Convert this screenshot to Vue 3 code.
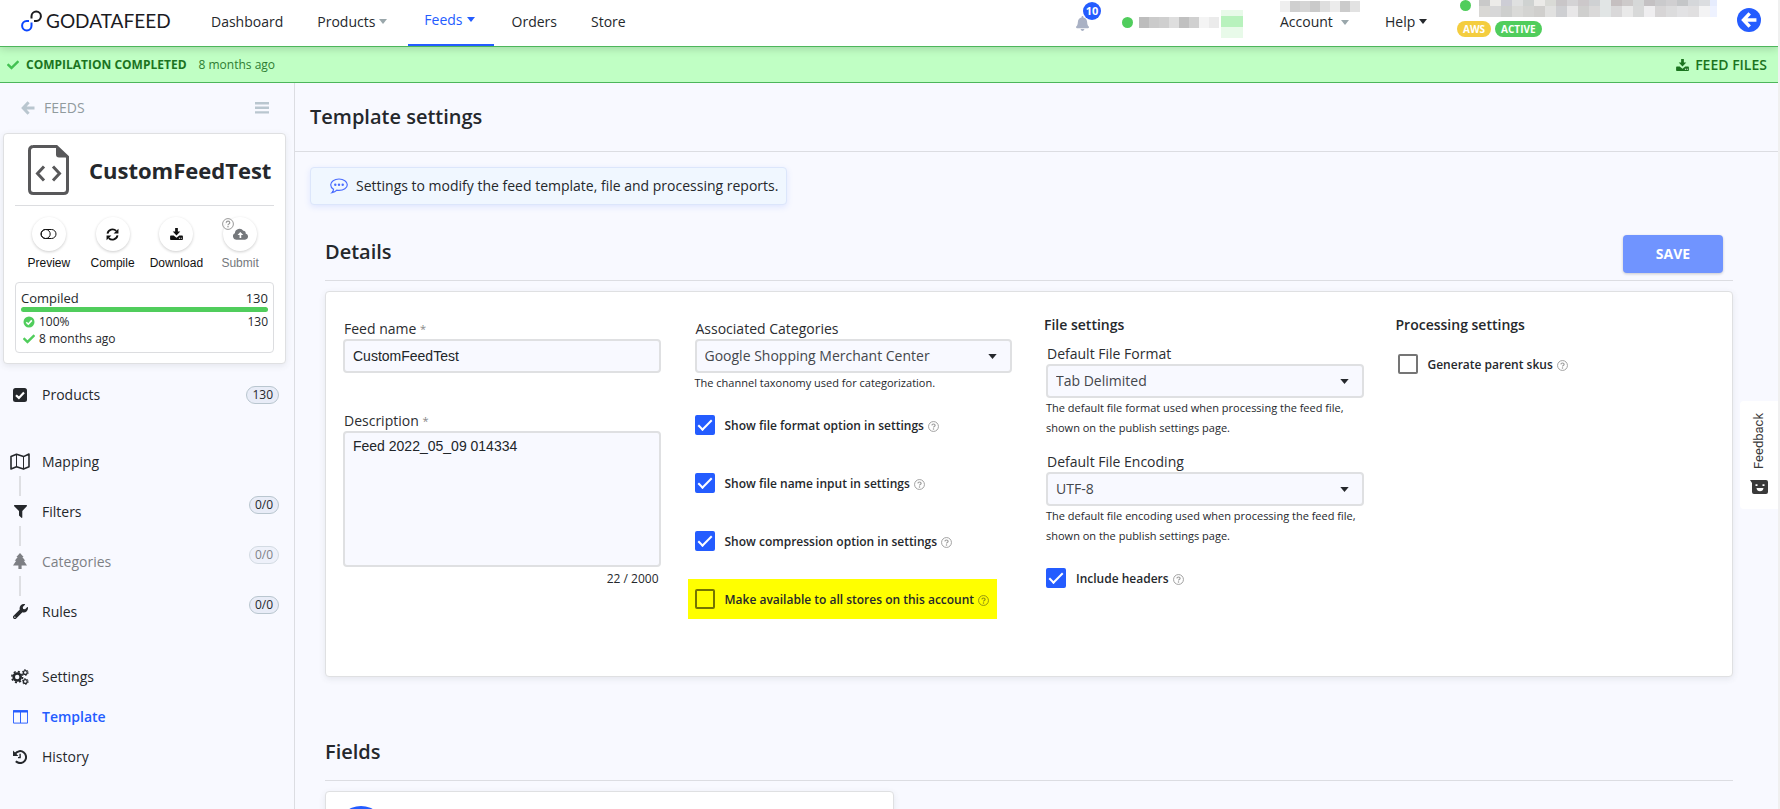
<script setup>
import { h, ref } from 'vue'

const glyphs = {
  check: ['0 0 512 512', '<path d="M173.9 439.4L7.5 273c-10-10-10-26.200 0-36.200l36.200-36.200c10-10 26.200-10 36.200 0L192 312.700 432.100 72.600c10-10 26.200-10 36.200 0l36.200 36.200c10 10 10 26.200 0 36.200L210.100 439.400c-10 10-26.200 10-36.200 0z"/>'],
  arrow: ['0 0 14 14', '<path d="M7.600 1.200L2.200 7l5.400 5.800M2.600 7H13.500" fill="none" stroke="currentColor" stroke-width="3"/>'],
  bars: ['0 0 14 12', '<path d="M0 0h14v2.400H0zM0 4.600h14V7H0zM0 9.200h14v2.400H0z"/>'],
  bell: ['0 0 448 512', '<path d="M224 512c35.320 0 63.970-28.650 63.970-64H160.030c0 35.350 28.650 64 63.970 64zm215.390-149.710c-19.320-20.760-55.470-51.990-55.470-154.290 0-77.700-54.480-139.900-127.940-155.160V32c0-17.670-14.320-32-31.980-32s-31.980 14.330-31.980 32v20.840C118.560 68.100 64.080 130.300 64.080 208c0 102.300-36.150 133.530-55.470 154.290-6 6.450-8.660 14.160-8.610 21.710.11 16.400 12.980 32 32.100 32h383.800c19.120 0 32-15.600 32.100-32 .05-7.550-2.610-15.270-8.610-21.710z"/>'],
  caret: ['0 0 10 6', '<path d="M0 0h10L5 6z"/>'],
  download: ['0 0 16 15', '<path d="M6.300 0h3.400v4.500h3L8 9.300 3.300 4.500h3z"/><path d="M1 9.500h3.500L8 12.200l3.500-2.700H15q1 0 1 1V14q0 1-1 1H1q-1 0-1-1v-3.500q0-1 1-1z"/><path d="M11 12.200h1.300v1.200H11zM13.300 12.200h1.300v1.200h-1.300z" fill="#fff"/>'],
  file: ['0 0 41 50', '<path d="M5 1.500h23.500L39.500 12v32.500q0 4-4 4H5.500q-4 0-4-4v-39q0-4 4-4z" fill="none" stroke="currentColor" stroke-width="3"/><path d="M28 1l12 11.500H31q-3 0-3-3z"/><path d="M16 21.500L9.500 28.500 16 35.500M25 21.500l6.500 7-6.500 7" fill="none" stroke="currentColor" stroke-width="3"/>'],
  toggle: ['0 0 17 12', '<rect x="1" y="1.500" width="15" height="9" rx="4.500" fill="none" stroke="currentColor" stroke-width="1"/><circle cx="5.700" cy="6" r="4.500" fill="none" stroke="currentColor" stroke-width="1"/>'],
  refresh: ['0 0 14 14', '<path d="M1.600 6A5.500 5.500 0 0 1 11 3.200M12.400 8A5.500 5.500 0 0 1 3 10.800" fill="none" stroke="currentColor" stroke-width="2"/><path d="M13.400.8V6H8.200zM.6 13.200V8h5.200z"/>'],
  cloud: ['0 0 16 12', '<path d="M3.500 12A3.500 3.500 0 0 1 2 5.300 5 5 0 0 1 11 2.500 2.500 2.500 0 0 1 13.500 5.500 3.300 3.300 0 0 1 12.800 12z"/><path d="M7.800 3.800L4.800 7H7v3.200h1.800V7H11z" fill="#fff"/>'],
  help: ['0 0 12 12', '<circle cx="6" cy="6" r="5.400" fill="none" stroke="currentColor"/><path d="M4.200 4.800Q4.300 3.200 6 3.200T7.800 4.700Q7.800 5.500 6.800 6 6 6.400 6 7.200" fill="none" stroke="currentColor" stroke-width="1.200"/><circle cx="6" cy="8.800" r=".8"/>'],
  circleCheck: ['0 0 12 12', '<circle cx="6" cy="6" r="5.500"/><path d="M3.300 6.200l2 2 3.500-3.800" fill="none" stroke="#fff" stroke-width="1.600"/>'],
  squareCheck: ['0 0 14 14', '<rect width="14" height="14" rx="2.500"/><path d="M3 7.200l2.900 2.700L11 4.600" fill="none" stroke="#fff" stroke-width="2.200"/>'],
  map: ['0 0 20 17', '<path d="M1 3.500L6.500 1.200l7 2.400L19 1v12.800l-5.500 2.300-7-2.400L1 16z" fill="none" stroke="currentColor" stroke-width="1.600" stroke-linejoin="round"/><path d="M6.500 1.500v12M13.500 4v12" stroke="currentColor" stroke-width="1"/>'],
  filter: ['0 0 13 13', '<path d="M.5 0h12q.8.500.3 1.200L8.300 6v6.600q-.3.600-.9.200L5 10.600V6L.2 1.200Q-.300.400.5 0z"/>'],
  tree: ['0 0 14 16', '<path d="M7 0l3.600 4H9.300l3 3.700h-1.500L14 12.500H8.600V16H5.400v-3.500H0l3.200-4.800H1.700l3-3.700H3.400z"/>'],
  wrench: ['0 0 512 512', '<path d="M507.730 109.100c-2.240-9.030-13.540-12.090-20.120-5.510l-74.360 74.360-67.880-11.310-11.310-67.880 74.360-74.360c6.620-6.620 3.430-17.900-5.660-20.160-47.380-11.740-99.550.91-136.580 37.930-39.640 39.640-50.550 97.100-34.050 147.200L18.740 402.760c-24.990 24.990-24.990 65.510 0 90.500 24.990 24.990 65.510 24.990 90.500 0l213.210-213.210c50.120 16.710 107.470 5.680 147.370-34.220 37.070-37.070 49.700-89.320 37.910-136.730zM64 472c-13.250 0-24-10.750-24-24 0-13.260 10.750-24 24-24s24 10.740 24 24c0 13.250-10.750 24-24 24z"/>'],
  cogs: ['0 0 18 16', '<g fill="none" stroke="currentColor"><circle cx="6.200" cy="8" r="3.500" stroke-width="2.600"/><circle cx="6.200" cy="8" r="5.400" stroke-width="1.600" stroke-dasharray="2.100 2.140"/><circle cx="14.300" cy="3.500" r="1.900" stroke-width="1.300"/><circle cx="14.300" cy="3.500" r="2.900" stroke-width="1" stroke-dasharray="1.500 1.540"/><circle cx="14.300" cy="12.500" r="1.900" stroke-width="1.300"/><circle cx="14.300" cy="12.500" r="2.900" stroke-width="1" stroke-dasharray="1.500 1.540"/></g>'],
  columns: ['0 0 16 14', '<path d="M.5 0h15v13.500H.500z" fill="none" stroke="currentColor"/><path d="M0 0h16v2.200H0zM7.500 2h1v11.500h-1z"/>'],
  history: ['0 0 14 14', '<path d="M2.200 3.600A6 6 0 1 1 2.800 11.300" fill="none" stroke="currentColor" stroke-width="2"/><path d="M0 .6V6h5.400zM6.400 3.800h1.400v3.300H6.400z"/><path d="M7.800 6.500v1.700H5V7h1.400z"/>'],
  comment: ['0 0 18 16', '<path d="M9 1c4.600 0 8.300 2.500 8.300 5.700S13.600 12.300 9 12.300q-1.100 0-2.200-.2Q5 14.200 2 14.700q1.400-1.300 1.500-3.500Q.7 9.500.7 6.700C.700 3.500 4.400 1 9 1z" fill="none" stroke="currentColor" stroke-width="1.200"/><circle cx="5.300" cy="6.700" r="1.200"/><circle cx="9" cy="6.700" r="1.200"/><circle cx="12.700" cy="6.700" r="1.200"/>'],
  logo: ['0 0 21 22', '<g fill="none" stroke-width="2"><path d="M10.500 8.500V6.200A4.700 4.700 0 1 1 15.200 11H13" stroke="#1b1b1f"/><path d="M8 11H5.700a4.700 4.700 0 1 0 4.800 4.700v-3.200" stroke="#0b46ff"/></g>'],
  smile: ['0 0 18 14', '<path d="M0 0h16q2 0 2 2v10q0 2-2 2H4q-2 0-2-2V3z"/><path d="M5.500 4.300h2v1.800h-2zM12.500 4.300h2v1.800h-2zM6.500 8h7q-.5 3.300-3.500 3.300T6.500 8z" fill="#fff"/>']
}

const Icon = ({ name }) =>
  h('svg', { viewBox: glyphs[name][0], fill: 'currentColor', 'aria-hidden': 'true', innerHTML: glyphs[name][1] })
Icon.props = ['name']

const nav = [
  { label: 'Dashboard' },
  { label: 'Products', caret: true, muted: true },
  { label: 'Feeds', caret: true, active: true },
  { label: 'Orders' },
  { label: 'Store' }
]

const actions = [
  { label: 'Preview', icon: 'toggle' },
  { label: 'Compile', icon: 'refresh' },
  { label: 'Download', icon: 'download' },
  { label: 'Submit', icon: 'cloud', disabled: true }
]

const steps = [
  { label: 'Mapping', icon: 'map' },
  { label: 'Filters', icon: 'filter', count: '0/0' },
  { label: 'Categories', icon: 'tree', count: '0/0', dim: true },
  { label: 'Rules', icon: 'wrench', count: '0/0' }
]

const links = [
  { label: 'Settings', icon: 'cogs' },
  { label: 'Template', icon: 'columns', active: true },
  { label: 'History', icon: 'history' }
]

const options = ref([
  { id: 'opt-format', label: 'Show file format option in settings', on: true },
  { id: 'opt-name', label: 'Show file name input in settings', on: true },
  { id: 'opt-zip', label: 'Show compression option in settings', on: true },
  { id: 'opt-all', label: 'Make available to all stores on this account', on: false, marked: true }
])

const feedName = ref('CustomFeedTest')
const description = ref('Feed 2022_05_09 014334')
const includeHeaders = ref(true)
const parentSkus = ref(false)

const statusTiles = ['#bdbdbd', '#cbcbcb', '#cfcfcf', '#dedede', '#c0c0c0', '#d0d0d0', '#f4f4f4', '#ebebeb']
const userTiles = ['#efefef', '#cfcfcf', '#d5d5d5', '#cacaca', '#dedede', '#ececec', '#cbcbcb', '#e2e2e2']
const storeTiles = [
  ['#c9c9c9', '#ecebe9', '#cdcdd5', '#dfe0e0', '#cfd2d1', '#ebeae8', '#d9dad6', '#c9c6c8', '#d4d3d5', '#ccc8ca', '#cfd1d3', '#e1e5e5', '#c5bfc0', '#cdcaca', '#d6d8d8', '#c4c1c3', '#cacacc', '#d0cfd1', '#c4c6c8', '#d5d7da', '#dbdde0', '#e6ecfd'],
  ['#d9d8d5', '#d7d7d8', '#cecfce', '#dadad8', '#d4d4d2', '#d0cfcd', '#e1e1e0', '#cecfd2', '#e8e7e8', '#cfcfce', '#dad9d9', '#e1e5e5', '#d9d8d9', '#e9e9e9', '#d8d9d9', '#efeef0', '#d7d5d6', '#dcdcdd', '#e2e2e4', '#e0dfe0', '#f3f3f4', '#eef2ff']
]
</script>

<template>
  <div class="page">
    <header class="top">
      <a class="brand" href="#"><Icon name="logo" class="brand-mark" />GODATAFEED</a>
      <nav class="nav">
        <a v-for="n in nav" :key="n.label" href="#" :class="{ active: n.active }">
          {{ n.label }}<Icon v-if="n.caret" name="caret" class="caret" :class="{ muted: n.muted }" />
        </a>
      </nav>
      <div class="tools">
        <button class="bell" aria-label="Notifications"><Icon name="bell" /><span class="count">10</span></button>
        <div class="status">
          <span class="dot"></span>
          <span class="tiles"><i v-for="(c, i) in statusTiles" :key="i" :style="{ background: c }"></i></span>
          <span class="mint"></span>
        </div>
        <div class="account">
          <span class="tiles"><i v-for="(c, i) in userTiles" :key="i" :style="{ background: c }"></i></span>
          <a href="#">Account<Icon name="caret" class="caret muted" /></a>
        </div>
        <a class="help-link" href="#">Help<Icon name="caret" class="caret" /></a>
        <div class="store">
          <div class="store-row">
            <span class="dot"></span>
            <div class="mosaic">
              <span v-for="(row, r) in storeTiles" :key="r" class="tiles"><i v-for="(c, i) in row" :key="i" :style="{ background: c }"></i></span>
            </div>
          </div>
          <div class="pills"><span class="pill aws">AWS</span><span class="pill">ACTIVE</span></div>
        </div>
        <button class="back" aria-label="Back"><Icon name="arrow" /></button>
      </div>
    </header>

    <div class="banner">
      <Icon name="check" class="banner-check" />
      <strong>COMPILATION COMPLETED</strong>
      <span>8 months ago</span>
      <a href="#"><Icon name="download" />FEED FILES</a>
    </div>

    <div class="body">
      <aside class="side">
        <div class="crumb">
          <a href="#"><Icon name="arrow" />FEEDS</a>
          <button aria-label="Menu"><Icon name="bars" /></button>
        </div>
        <section class="feed card">
          <div class="feed-head"><Icon name="file" /><h2>CustomFeedTest</h2></div>
          <div class="actions">
            <button v-for="a in actions" :key="a.label" :disabled="a.disabled">
              <span class="round"><Icon :name="a.icon" :class="'g-' + a.icon" /><Icon v-if="a.disabled" name="help" class="hint" /></span>
              {{ a.label }}
            </button>
          </div>
          <div class="compiled">
            <div class="line title"><span>Compiled</span><span>130</span></div>
            <div class="bar"></div>
            <div class="line"><span><Icon name="circleCheck" />100%</span><span>130</span></div>
            <div class="line"><span><Icon name="check" />8 months ago</span></div>
          </div>
        </section>
        <nav class="menu">
          <a href="#" class="item"><span class="ico"><Icon name="squareCheck" class="g-squareCheck" /></span>Products<span class="badge">130</span></a>
          <div class="steps">
            <a v-for="s in steps" :key="s.label" href="#" class="step" :class="{ dim: s.dim }">
              <span class="track"><span class="ico"><Icon :name="s.icon" :class="'g-' + s.icon" /></span></span>
              <span class="name">{{ s.label }}</span>
              <span v-if="s.count" class="badge">{{ s.count }}</span>
            </a>
          </div>
          <a v-for="l in links" :key="l.label" href="#" class="item" :class="{ active: l.active }"><span class="ico"><Icon :name="l.icon" :class="'g-' + l.icon" /></span>{{ l.label }}</a>
        </nav>
      </aside>

      <main class="main">
        <div class="title-row"><h1>Template settings</h1></div>
        <p class="info"><Icon name="comment" />Settings to modify the feed template, file and processing reports.</p>

        <section class="block">
          <div class="block-head"><h2>Details</h2><button class="save">SAVE</button></div>
          <form class="card details" @submit.prevent>
            <div class="col">
              <label class="label" for="feed-name">Feed name <sup>*</sup></label>
              <input id="feed-name" v-model="feedName" class="field" type="text" />
              <label class="label second" for="feed-desc">Description <sup>*</sup></label>
              <textarea id="feed-desc" v-model="description" class="field area"></textarea>
              <div class="counter">{{ description.length }} / 2000</div>
            </div>

            <div class="col">
              <label class="label" for="cats">Associated Categories</label>
              <div class="pick"><select id="cats" class="field"><option>Google Shopping Merchant Center</option></select><Icon name="caret" /></div>
              <p class="note">The channel taxonomy used for categorization.</p>
              <div class="options">
                <label v-for="o in options" :key="o.id" class="tick" :class="{ marked: o.marked }" :for="o.id">
                  <input :id="o.id" v-model="o.on" type="checkbox" /><span>{{ o.label }}</span><Icon name="help" />
                </label>
              </div>
            </div>

            <div class="col">
              <h3>File settings</h3>
              <label class="label" for="format">Default File Format</label>
              <div class="pick"><select id="format" class="field"><option>Tab Delimited</option></select><Icon name="caret" /></div>
              <p class="note">The default file format used when processing the feed file, shown on the publish settings page.</p>
              <label class="label spaced" for="encoding">Default File Encoding</label>
              <div class="pick"><select id="encoding" class="field"><option>UTF-8</option></select><Icon name="caret" /></div>
              <p class="note">The default file encoding used when processing the feed file, shown on the publish settings page.</p>
              <label class="tick headers" for="headers"><input id="headers" v-model="includeHeaders" type="checkbox" /><span>Include headers</span><Icon name="help" /></label>
            </div>

            <div class="col">
              <h3>Processing settings</h3>
              <label class="tick skus" for="skus"><input id="skus" v-model="parentSkus" type="checkbox" /><span>Generate parent skus</span><Icon name="help" /></label>
            </div>
          </form>
        </section>

        <section class="block fields">
          <div class="block-head"><h2>Fields</h2></div>
          <div class="card field-card"><button class="add" aria-label="Add field"></button></div>
        </section>
      </main>
    </div>

    <button class="feedback"><span>Feedback</span><Icon name="smile" /></button>
  </div>
</template>

<style>
body { margin: 0; }
</style>

<style scoped>
.page {
  box-sizing: border-box;
  display: flex;
  flex-direction: column;
  height: 100vh;
  overflow: hidden;
  border-right: 2px solid #f0f0f0;
  background: #f8f9ff;
  color: #25282c;
  font: 14px/20px "Open Sans", "Noto Sans", sans-serif;
}
.page *, .page *::before, .page *::after { box-sizing: border-box; }
a { color: inherit; text-decoration: none; }
button { border: 0; padding: 0; background: none; color: inherit; font: inherit; }
h1, h2, h3, p { margin: 0; font-weight: 600; }
svg { display: block; flex: none; }

.card { background: #fff; border: 1px solid #dfe0e2; border-radius: 4px; box-shadow: 0 2px 6px rgba(60, 64, 80, .1); }

.top {
  position: relative;
  z-index: 2;
  display: flex;
  height: 47px;
  background: #fff;
  border-bottom: 1px solid #4db65b;
  box-shadow: 0 2px 8px rgba(0, 0, 0, .16);
}
.brand { display: flex; align-items: center; gap: 4px; width: 195px; padding-left: 21px; padding-bottom: 4px; color: #1b1b1f; font: 19px/24px Lato, sans-serif; }
.brand-mark { width: 21px; height: 22px; }
.nav { display: flex; gap: 2px; font-weight: 500; }
.nav a { display: flex; align-items: center; padding: 0 16px 3px; }
.nav a.active { padding-bottom: 5px; border-bottom: 2px solid #245cff; color: #245cff; }
.caret { width: 8px; height: 5px; margin: 0 3px 0 4px; }
.caret.muted { color: #9aa7ab; }
.tools { display: flex; margin-left: auto; padding-right: 17px; font-weight: 500; }
.bell { position: relative; width: 28px; height: 46px; color: #a9b1c4; }
.bell svg { width: 13px; height: 15px; }
.count { position: absolute; left: 7px; top: 2px; width: 18px; height: 18px; border-radius: 50%; background: #245cff; color: #fff; font: bold 11px/18px "Open Sans", sans-serif; text-align: center; }
.dot { width: 11px; height: 11px; border-radius: 50%; background: #50cd5c; }
.status { display: flex; align-items: center; margin-left: 18px; height: 44px; }
.status .tiles { margin: 0 2px 0 6px; }
.tiles { display: flex; }
.tiles i { width: 11px; height: 11px; }
.status .tiles i, .account .tiles i { width: 10px; }
.mint { width: 22px; height: 28px; margin-top: 4px; background: linear-gradient(#e8fae9 0 6px, #b8f2bd 6px 17px, #e8fae9 17px); }
.account { width: 105px; margin-left: 37px; padding-top: 1px; }
.account a { display: flex; align-items: center; }
.account .caret { margin-left: 8px; }
.help-link { display: flex; align-items: center; height: 43px; width: 72px; }
.store { display: flex; flex-direction: column; gap: 4px; width: 280px; }
.store-row { display: flex; gap: 8px; padding-left: 3px; }
.mosaic { height: 17px; overflow: hidden; }
.mosaic .tiles:first-child { height: 6px; overflow: hidden; }
.mosaic i:last-child { width: 7px; }
.pills { display: flex; gap: 4px; }
.pill { padding: 0 6px; border-radius: 8px; background: #50cd5c; color: #fff; font-size: 10px; font-weight: 700; line-height: 16px; }
.pill.aws { background: #f4cd3f; }
.back { display: flex; align-items: center; justify-content: center; width: 24px; height: 24px; margin-top: 8px; border-radius: 50%; background: #245cff; color: #fff; }
.back svg { width: 16px; height: 16px; }

.banner { display: flex; align-items: center; height: 36px; padding: 0 11px 0 7px; background: #c0ffc4; border-bottom: 1px solid #4db65b; font-size: 12px; color: #2e7d32; }
.banner-check { width: 12px; height: 12px; margin-right: 7px; color: #43c152; }
.banner strong { margin-right: 12px; color: #1b741f; font-weight: 700; }
.banner a { display: flex; align-items: center; gap: 6px; margin-left: auto; color: #1b741f; font-size: 14px; font-weight: 600; }
.banner a svg { width: 13px; height: 12px; }

.body { display: flex; flex: 1; min-height: 0; }
.side { width: 295px; flex: none; border-right: 1px solid #dcdde2; overflow: hidden; }
.crumb { display: flex; justify-content: space-between; align-items: center; height: 50px; padding: 0 25px 0 21px; color: #b9c6cf; }
.crumb a { display: flex; align-items: center; gap: 9px; color: #919b9e; font-weight: 500; }
.crumb a svg { width: 14px; height: 14px; color: #b9c6cf; }
.crumb button svg { width: 14px; height: 12px; }
.feed { margin: 0 8px 0 3px; padding: 11px 11px 10px; }
.feed-head { display: flex; align-items: center; gap: 20px; height: 61px; padding: 0 0 10px 13px; border-bottom: 1px solid #dcdde0; }
.feed-head svg { width: 41px; height: 50px; color: #58585a; }
.feed-head h2 { font-size: 22px; line-height: 30px; font-weight: 700; }
.actions { display: grid; grid-template-columns: repeat(4, 1fr); margin: 11px 2px 11px; font: 12px/16px "Liberation Sans", Arial, sans-serif; }
.actions button { display: flex; flex-direction: column; align-items: center; gap: 4px; font: inherit; color: #111; }
.actions button:disabled { color: #75787c; }
.round { position: relative; display: flex; align-items: center; justify-content: center; width: 34px; height: 34px; border-radius: 50%; background: #fff; box-shadow: 0 1px 3px rgba(0, 0, 0, .2); }
.hint { position: absolute; left: -1px; top: 1px; width: 12px; height: 12px; color: #999; }
.g-toggle { width: 17px; height: 12px; }
.g-refresh { width: 13px; height: 13px; }
.g-download { width: 13px; height: 12px; }
.g-cloud { width: 15px; height: 12px; }
.compiled { padding: 6px 5px 5px; border: 1px solid #dcdde0; border-radius: 4px; font-size: 12px; line-height: 17px; }
.line { display: flex; justify-content: space-between; }
.line span { display: flex; align-items: center; gap: 4px; }
.line svg { width: 12px; height: 12px; margin-left: 2px; color: #50cd5c; }
.line.title { font-size: 13px; font-weight: 500; line-height: 18px; }
.bar { height: 5px; margin-bottom: 1px; border-radius: 3px; background: #50cd5c; }

.menu { padding-top: 14px; }
.item { display: flex; align-items: center; height: 40px; padding: 0 15px 0 5px; }
.item:first-child { height: 34px; }
.item .badge { margin-left: auto; }
.item.active { color: #245cff; font-weight: 600; }
.ico { display: flex; align-items: center; justify-content: center; width: 30px; height: 30px; margin-right: 7px; }
.badge { height: 18px; padding: 0 5px; border: 1px solid #b9c6cf; border-radius: 9px; background: #e8ecf7; font-size: 12px; line-height: 16px; }
.steps { margin-top: 34px; padding-bottom: 11px; }
.step { display: flex; align-items: flex-start; height: 50px; padding: 0 15px 0 5px; }
.step .badge { margin-left: auto; }
.step .name { line-height: 32px; }
.step .ico { margin: 0; }
.track { display: flex; flex-direction: column; align-items: center; margin-right: 7px; }
.track::after { content: ""; width: 2px; height: 20px; background: #dedfe3; }
.step:last-child .track::after { background: none; }
.dim .name, .dim .ico, .dim .badge { opacity: .58; }
.g-squareCheck { width: 14px; height: 14px; }
.g-map { width: 20px; height: 17px; }
.g-filter { width: 13px; height: 13px; }
.g-tree { width: 14px; height: 16px; }
.g-wrench { width: 15px; height: 15px; }
.g-cogs { width: 18px; height: 16px; }
.g-columns { width: 15px; height: 14px; }
.g-history { width: 14px; height: 14px; }

.main { flex: 1; min-width: 0; overflow: auto; scrollbar-width: none; }
.title-row { padding: 20px 15px; border-bottom: 1px solid #dcdde2; }
h1, .block-head h2 { font-size: 20px; line-height: 28px; }
.info { display: flex; align-items: center; gap: 8px; width: fit-content; height: 38px; margin: 15px 15px 0; padding: 0 8px 0 19px; border: 1px solid #dce6fb; border-radius: 4px; background: #f0f7ff; box-shadow: 0 2px 6px rgba(70, 110, 255, .14); font-weight: 400; }
.info svg { width: 18px; height: 16px; color: #4a6cff; }
.block { margin: 30px 45px 0 30px; }
.block-head { display: flex; justify-content: space-between; align-items: center; height: 46px; margin-bottom: 10px; padding: 0 10px 8px 0; border-bottom: 1px solid #dcdde2; }
.block-head h2 { padding-bottom: 4px; }
.save { width: 100px; height: 38px; border-radius: 4px; background: #7094ff; color: #fff; font-size: 14px; font-weight: 700; box-shadow: 0 1px 3px rgba(0, 0, 0, .2); }
.details { display: grid; grid-template-columns: repeat(4, 1fr); min-height: 386px; }
.col { padding: 27px 17px 0; }
.label { display: block; padding-left: 1px; line-height: 20px; font-weight: 500; color: #2b2d31; }
.label sup { color: #888; font-size: 11px; line-height: 0; vertical-align: 1px; }
.label.second { margin-top: 38px; }
.label.spaced { margin-top: 14px; }
.field { display: block; width: 100%; height: 34px; margin: 0; padding: 0 8px; border: 2px solid #dfe0e2; border-radius: 4px; background: #f8f9ff; color: #212529; font: 14px/20px "Liberation Sans", Arial, sans-serif; outline: 0; }
.area { height: 136px; padding: 3px 8px; resize: none; }
.counter { padding: 2px 2px 0 0; text-align: right; font-size: 12px; }
.pick { display: grid; align-items: center; }
.pick > * { grid-area: 1 / 1; }
.pick svg { width: 9px; height: 5px; margin-right: 15px; justify-self: end; pointer-events: none; }
select.field { appearance: none; color: #44474c; font-family: "Open Sans", "Noto Sans", sans-serif; }
.note { font-size: 11px; line-height: 20px; font-weight: 400; }
h3 { font-size: 14px; line-height: 20px; }
.col:nth-child(n+3) { padding-top: 23px; }
.col h3 { margin: 0 0 9px -2px; }
.options { display: flex; flex-direction: column; align-items: flex-start; gap: 18px; margin: 12px 0 0 -7px; }
.tick { display: flex; align-items: center; height: 40px; padding: 0 8px 0 7px; font-size: 12px; font-weight: 600; }
.tick span { margin: 2px 4px 0 10px; }
.tick svg { width: 11px; height: 11px; margin-top: 2px; color: #999; }
.tick.marked { background: #ff0; }
.tick.marked svg { color: #8d8d10; }
.tick input { appearance: none; display: grid; place-items: center; width: 20px; height: 20px; margin: 0; border: 2px solid #757575; border-radius: 2px; }
.tick.marked input { border-color: #757500; }
.tick input:checked { border-color: #245cff; background: #245cff; }
.tick input:checked::after { content: ""; width: 14px; height: 7px; border: solid #fff; border-width: 0 0 2px 2px; transform: translateY(-2px) rotate(-45deg); }
.tick.headers { margin: 12px 0 0 -7px; }
.tick.skus { margin-top: 5px; margin-left: -7px; }
.fields { margin-top: 58px; }
.field-card { width: 569px; max-width: 100%; padding: 14px 11px; }
.add { display: block; width: 48px; height: 48px; border-radius: 50%; background: #245cff; }

.feedback { position: fixed; right: 2px; top: 401px; display: flex; flex-direction: column; align-items: center; justify-content: space-between; width: 38px; height: 108px; padding: 12px 0 15px; border-radius: 4px 0 0 4px; background: #fff; color: #3a3a3a; font: 13px/16px Roboto, sans-serif; }
.feedback span { writing-mode: vertical-rl; transform: rotate(180deg); }
.feedback svg { width: 18px; height: 14px; }
</style>
